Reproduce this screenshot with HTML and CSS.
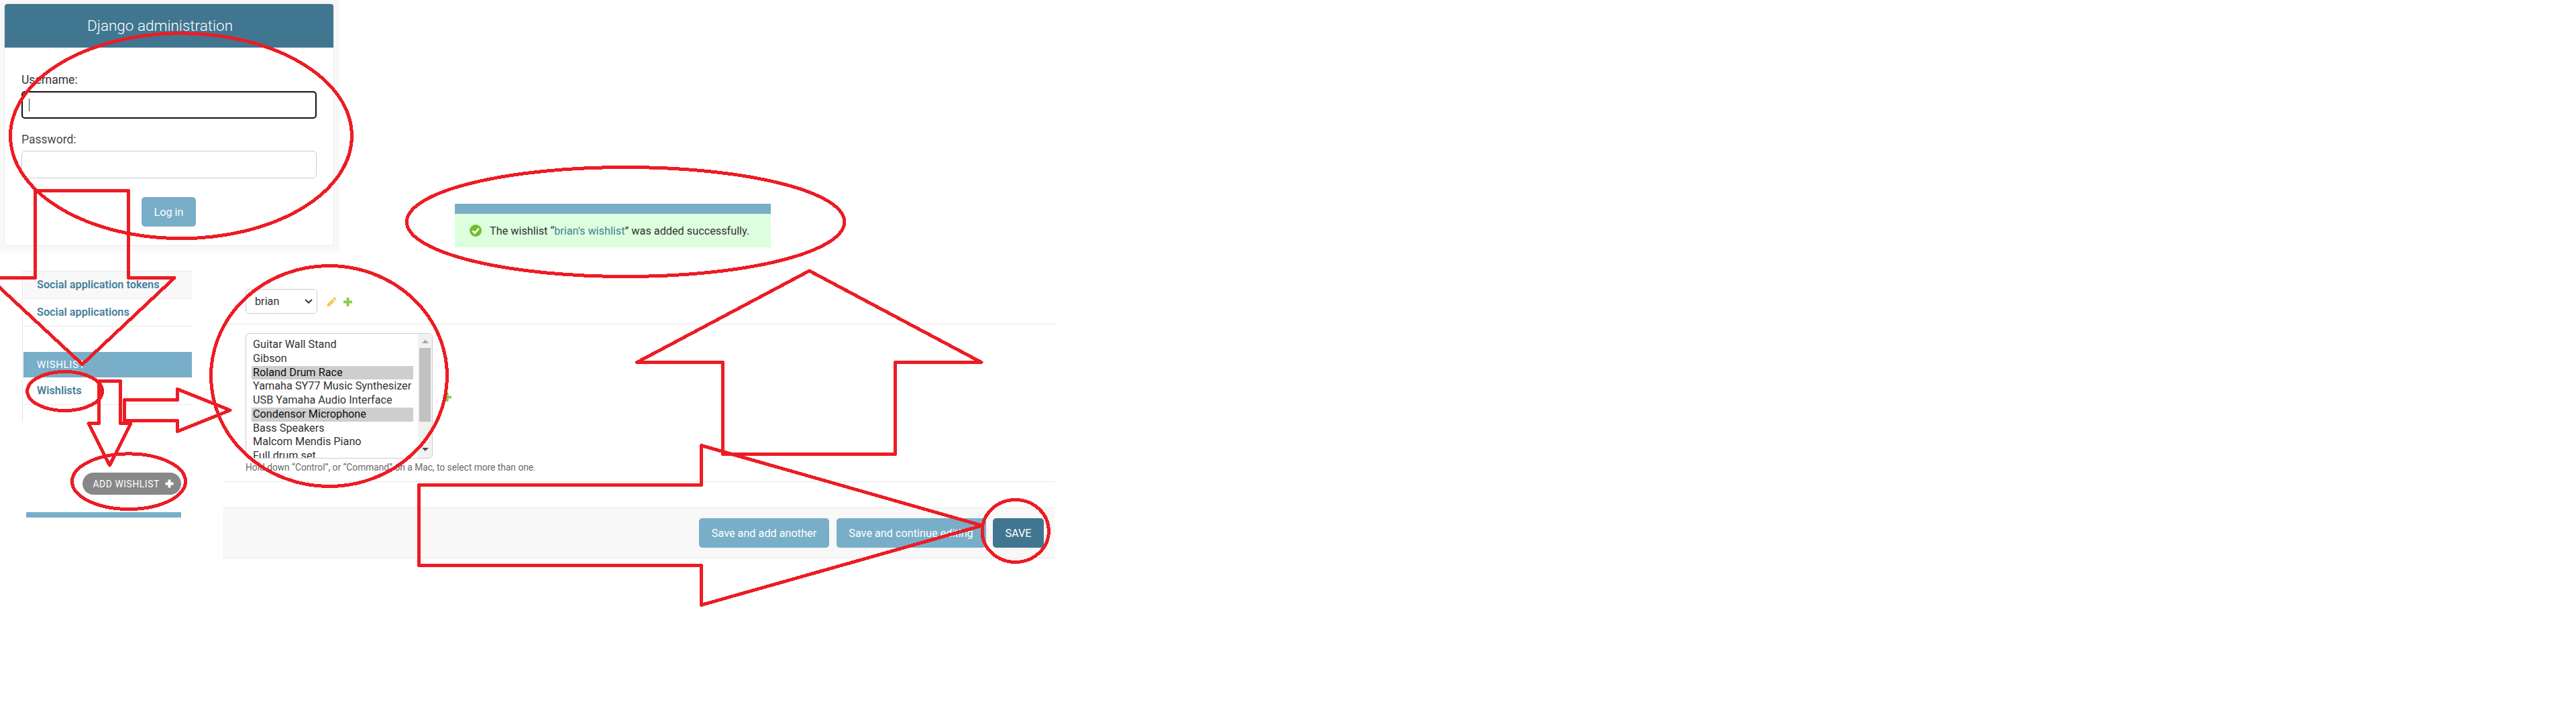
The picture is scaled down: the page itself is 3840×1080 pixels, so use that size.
FILE: index.html
```
<!DOCTYPE html>
<html lang="en">
<head>
<meta charset="utf-8">
<title>Django administration</title>
<link rel="stylesheet" href="styles.css">
</head>
<body>
<main class="board">
  <div class="top">
    <section class="login">
      <div class="login-card">
        <h1 class="login-title">Django administration</h1>
        <form class="login-form">
          <label class="login-label dark">Username:</label>
          <div class="input focused"><span class="caret"></span></div>
          <label class="login-label second">Password:</label>
          <div class="input"></div>
          <button type="button" class="btn login-btn">Log in</button>
        </form>
      </div>
    </section>
    <section class="message">
      <div class="message-bar"></div>
      <p class="message-text">
        <svg class="ok" viewBox="0 0 18 18"><circle cx="9" cy="9" r="9" fill="#70bf2b"/><path d="M4.4 9.2 7.9 12.6 13.8 5.8" fill="none" stroke="#fff" stroke-width="2.6"/></svg>
        <span>The wishlist “<a class="link">brian's wishlist</a>” was added successfully.</span>
      </p>
    </section>
  </div>

  <div class="bottom">
    <aside class="side">
      <div class="apps">
        <div class="app-row shaded">Social application tokens</div>
        <div class="app-row">Social applications</div>
        <div class="app-head">WISHLIST</div>
        <div class="app-row wish">Wishlists</div>
      </div>
      <a class="pill">ADD WISHLIST
        <svg class="pill-plus" viewBox="0 0 13 13"><path d="M6.5 0.5V12.5M0.5 6.5H12.5" stroke="#fff" stroke-width="4" fill="none"/></svg>
      </a>
      <div class="strip"></div>
    </aside>

    <section class="editor">
      <div class="row user-row">
        <div class="select">brian
          <svg class="chevron" viewBox="0 0 12 7"><path d="M1 1 6 5.6 11 1" fill="none" stroke="#333" stroke-width="2"/></svg>
        </div>
        <svg class="pencil" viewBox="0 0 14 15"><path d="M0.3 14.6 1.1 10.4 8.3 3.2 11.6 6.5 4.4 13.7Z" fill="#f3c544"/><path d="M9.2 2.3 10.8 0.7Q11.6 0.1 12.4 0.8L13.5 1.9Q14.2 2.8 13.5 3.6L12.2 5.3Z" fill="#f3c544"/><path d="M3.2 11.4 9.4 5.2" stroke="#fbe5ab" stroke-width="0.8"/></svg>
        <svg class="plus" viewBox="0 0 13 13"><path d="M6.5 0V13M0 6.5H13" stroke="#8ccc55" stroke-width="4" fill="none"/></svg>
      </div>
      <div class="row items-row">
        <div class="items-line">
          <div class="listbox">
            <ul class="options">
              <li>Guitar Wall Stand</li>
              <li>Gibson</li>
              <li class="selected">Roland Drum Race</li>
              <li>Yamaha SY77 Music Synthesizer</li>
              <li>USB Yamaha Audio Interface</li>
              <li class="selected">Condensor Microphone</li>
              <li>Bass Speakers</li>
              <li>Malcom Mendis Piano</li>
              <li>Full drum set</li>
            </ul>
            <div class="scroll">
              <span class="up"></span>
              <span class="thumb"></span>
              <span class="down"></span>
            </div>
          </div>
          <svg class="plus" viewBox="0 0 13 13"><path d="M6.5 0V13M0 6.5H13" stroke="#8ccc55" stroke-width="4" fill="none"/></svg>
        </div>
        <p class="help">Hold down “Control”, or “Command” on a Mac, to select more than one.</p>
      </div>
      <div class="submit">
        <button type="button" class="btn another">Save and add another</button>
        <button type="button" class="btn continue">Save and continue editing</button>
        <button type="button" class="btn save">SAVE</button>
      </div>
    </section>
  </div>

  <svg class="marks" viewBox="0 0 3840 1080">
    <ellipse cx="270" cy="202.7" rx="254.5" ry="153"/>
    <ellipse cx="96.7" cy="583.5" rx="56" ry="29"/>
    <ellipse cx="192" cy="718.2" rx="84.5" ry="41.3"/>
    <ellipse cx="490.5" cy="561" rx="176" ry="164.5"/>
    <ellipse cx="932.6" cy="331" rx="326.2" ry="81.5"/>
    <ellipse cx="1513.7" cy="792" rx="49.7" ry="46.5"/>
    <path d="M52.5 284.5H191.5V414.5H260L122.7 543.5-16 414.5H52.5Z"/>
    <path d="M147.5 568.5H179.5V631.5H195L163.5 694 132 631.5H147.5Z"/>
    <path d="M185.5 596.5H264.5V580.5L343 612 264.5 643.5V627.5H185.5Z"/>
    <path d="M1206.5 404 1463 540.5H1334.5V677.5H1077.5V540.5H949.5Z"/>
    <path d="M624.5 723.5H1045.5V664.5L1464 784 1045.5 902.5V843.5H624.5Z"/>
  </svg>
</main>
</body>
</html>
```
FILE: styles.css
```
* { box-sizing: border-box; }
body { margin: 0; background: #fff; font-family: Roboto, "Liberation Sans", sans-serif; font-size: 16.25px; color: #333; }
h1, p, ul { margin: 0; padding: 0; }
svg { display: block; flex: none; }

.board { position: relative; width: 3840px; height: 1080px; overflow: hidden; }
.marks { position: absolute; inset: 0; width: 3840px; height: 1080px; fill: none; stroke: #ed1c24; stroke-width: 5; stroke-linejoin: round; shape-rendering: crispEdges; }

.top { display: flex; height: 375px; }
.login { width: 506px; padding: 5px 8px 8px 6px; background: #f8f8f8; }
.login-card { height: 362px; border: 1px solid #eaeaea; border-radius: 5px; background: #fff; overflow: hidden; }
.login-title { height: 65px; padding-left: 123px; background: #417690; color: #fff; font-size: 22.5px; font-weight: 300; line-height: 65px; }
.login-form { display: flex; flex-direction: column; padding: 37px 25px 0; }
.login-label { margin-bottom: 6px; font-size: 17.5px; line-height: 22px; color: #4a4a4a; }
.login-label.dark { color: #333; }
.login-label.second { margin-top: 20px; }
.input { height: 41px; border: 1px solid #ccc; border-radius: 5px; }
.input.focused { display: flex; align-items: center; padding-left: 9px; border: 2px solid #101010; }
.caret { width: 1px; height: 19px; background: #333; }

.btn { height: 44px; padding: 0; border: 0; border-radius: 5px; background: #79aec8; color: #fff; font: 400 16.25px/43px Roboto, "Liberation Sans", sans-serif; }
.login-btn { width: 81px; margin: 28px 0 0 179px; }

.message { width: 471px; margin: 304px 0 0 172px; }
.message-bar { height: 15px; background: #79aec8; }
.message-text { display: flex; align-items: center; gap: 12px; height: 50px; padding-left: 22px; background: #dfd; white-space: nowrap; }
.ok { width: 18px; height: 18px; }
.link { color: #447e9b; }

.bottom { display: flex; }
.side { display: flex; flex-direction: column; width: 332px; padding-top: 28px; }
.apps { width: 253px; height: 226px; margin-left: 33px; padding: 1px 0 0 1px; border-left: 1px solid #e4e4e4; }
.app-row { height: 41px; padding-left: 20px; border-bottom: 1px solid #eaeaea; color: #447e9b; font-weight: 600; line-height: 40px; }
.app-row.shaded { height: 42px; border-top: 1px solid #eaeaea; background: #f8f8f8; }
.app-row.wish { line-height: 39px; }
.app-head { height: 38px; margin-top: 38px; padding-left: 20px; background: #79aec8; color: #fff; font-size: 15px; line-height: 38px; letter-spacing: 0.625px; }
.pill { display: flex; align-items: center; justify-content: space-between; width: 147px; height: 33px; margin: 76px 0 0 123px; padding: 0 11px 0 15.5px; border-radius: 17px; background: #888; color: #fff; font-size: 13.75px; letter-spacing: 0.625px; }
.pill-plus { width: 13px; height: 13px; }
.strip { width: 231px; height: 8px; margin: 26px 0 0 39px; background: #79aec8; }

.editor { width: 1240px; padding-top: 56px; }
.row { border-bottom: 1px solid #e8e8e8; }
.user-row { display: flex; align-items: center; height: 53px; margin-left: 5px; padding: 0 0 15px 29px; }
.select { display: flex; align-items: center; justify-content: space-between; width: 107px; height: 37px; padding: 0 6px 0 13px; border: 1px solid #ccc; border-radius: 5px; }
.chevron { width: 12px; height: 7px; }
.pencil { width: 14px; height: 15px; margin: 2px 0 0 14px; }
.plus { width: 13px; height: 13px; margin: 2px 0 0 11px; }
.items-row { height: 235px; padding: 13px 0 0 34px; }
.items-line { display: flex; align-items: center; }
.items-line .plus { margin: 4px 0 0 15px; }
.listbox { display: flex; justify-content: space-between; width: 279px; height: 187px; border: 1px solid #ccc; border-radius: 5px; overflow: hidden; }
.options { width: 249px; padding: 6px 0 0 8px; list-style: none; }
.options li { height: 20.75px; padding-left: 2px; line-height: 20px; white-space: nowrap; }
.options .selected { background: #cecece; color: #101010; }
.scroll { display: flex; flex-direction: column; align-items: center; width: 21px; height: 185px; padding: 9px 0 10px; background: #f1f1f1; }
.up, .down { border: 5px solid transparent; border-top-width: 0; border-bottom: 5px solid #a3a3a3; }
.down { margin-top: auto; border-top: 5px solid #505050; border-bottom-width: 0; }
.thumb { width: 17px; height: 110px; margin-top: 7px; background: #c1c1c1; }
.help { margin-top: 5px; color: #6a6a6a; font-size: 13.75px; line-height: 16px; }
.submit { display: flex; align-items: center; justify-content: flex-end; gap: 10.5px; height: 76px; margin-top: 38px; padding-right: 16px; border: solid #e8e8e8; border-width: 1px 0; background: #f8f8f8; }
.another { width: 194px; }
.continue { width: 223px; }
.save { width: 76px; background: #417690; }
```
